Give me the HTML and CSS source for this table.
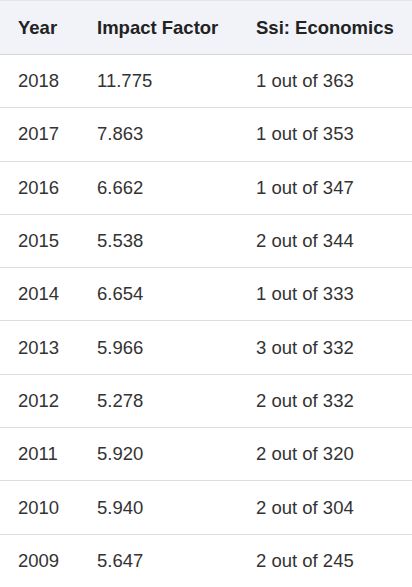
FILE: index.html
```html
<!DOCTYPE html>
<html lang="en">
<head>
    <meta charset="UTF-8">
    <meta name="viewport" content="width=device-width, initial-scale=1.0">
    <title>Impact Factor</title>
    <link rel="stylesheet" href="styles.css">
</head>
<body>
    <table class="if-table">
        <thead>
            <tr>
                <th class="col-year">Year</th>
                <th class="col-if">Impact Factor</th>
                <th>Ssi: Economics</th>
            </tr>
        </thead>
        <tbody>
            <tr><td>2018</td><td>11.775</td><td>1 out of 363</td></tr>
            <tr><td>2017</td><td>7.863</td><td>1 out of 353</td></tr>
            <tr><td>2016</td><td>6.662</td><td>1 out of 347</td></tr>
            <tr><td>2015</td><td>5.538</td><td>2 out of 344</td></tr>
            <tr><td>2014</td><td>6.654</td><td>1 out of 333</td></tr>
            <tr><td>2013</td><td>5.966</td><td>3 out of 332</td></tr>
            <tr><td>2012</td><td>5.278</td><td>2 out of 332</td></tr>
            <tr><td>2011</td><td>5.920</td><td>2 out of 320</td></tr>
            <tr><td>2010</td><td>5.940</td><td>2 out of 304</td></tr>
            <tr><td>2009</td><td>5.647</td><td>2 out of 245</td></tr>
        </tbody>
    </table>
</body>
</html>
```

FILE: styles.css
```css
* {
    margin: 0;
    padding: 0;
    box-sizing: border-box;
}

body {
    font-family: 'Liberation Sans', Arial, sans-serif;
    background-color: #fff;
    color: #333;
}

.if-table {
    width: 412px;
    border-collapse: collapse;
    font-size: 18.5px;
}

.if-table th,
.if-table td {
    text-align: left;
    padding: 0 18px;
    vertical-align: middle;
    white-space: nowrap;
}

.if-table th {
    height: 54px;
    background-color: #f1f3f8;
    color: #222;
    font-weight: bold;
    border-top: 1px solid #e4e6ec;
    border-bottom: 1px solid #d4d6da;
}

.if-table td {
    height: 53.3px;
    border-bottom: 1px solid #dcdde0;
}

.if-table tbody tr:last-child td {
    border-bottom: none;
}

.col-year {
    width: 79px;
}

.col-if {
    width: 159px;
}
```
